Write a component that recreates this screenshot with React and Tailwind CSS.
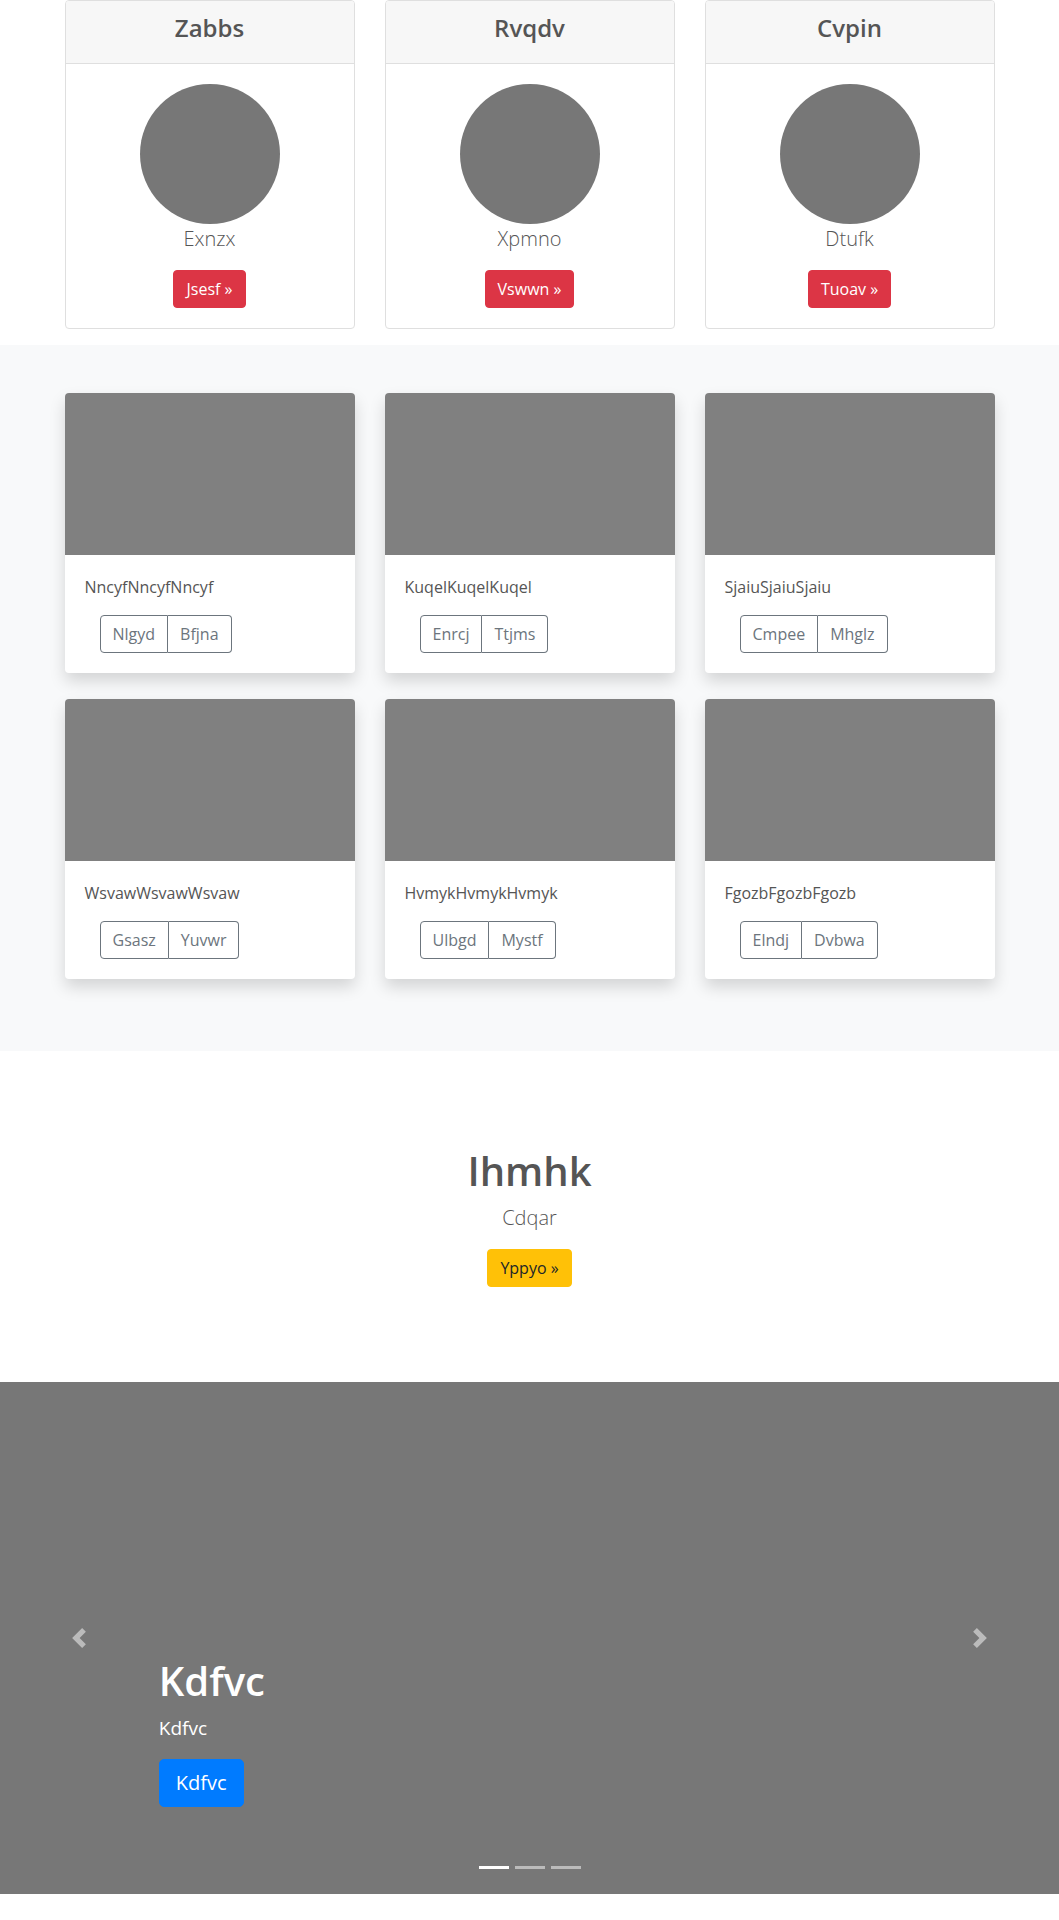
import React from 'react';

const plans = [
    { title: 'Zabbs', lead: 'Exnzx', cta: 'Jsesf' },
    { title: 'Rvqdv', lead: 'Xpmno', cta: 'Vswwn' },
    { title: 'Cvpin', lead: 'Dtufk', cta: 'Tuoav' },
];

const albums = [
    { text: 'NncyfNncyfNncyf', a: 'Nlgyd', b: 'Bfjna' },
    { text: 'KuqelKuqelKuqel', a: 'Enrcj', b: 'Ttjms' },
    { text: 'SjaiuSjaiuSjaiu', a: 'Cmpee', b: 'Mhglz' },
    { text: 'WsvawWsvawWsvaw', a: 'Gsasz', b: 'Yuvwr' },
    { text: 'HvmykHvmykHvmyk', a: 'Ulbgd', b: 'Mystf' },
    { text: 'FgozbFgozbFgozb', a: 'Elndj', b: 'Dvbwa' },
];

const PlanCard = ({ plan }) => (
    <div className="border border-[#dfdfdf] rounded-[4px] bg-white text-center">
        <div className="bg-[#f7f7f7] border-b border-[#dfdfdf] px-5 pt-[13px] pb-3 rounded-t-[3px]">
            <h4 className="text-[24px] font-semibold leading-[1.2] mb-2">{plan.title}</h4>
        </div>
        <div className="p-5">
            <div className="w-[140px] h-[140px] rounded-full bg-[#777] mx-auto" />
            <p className="text-[20px] font-light leading-[30px] mb-4">{plan.lead}</p>
            <button className="bg-[#dc3545] text-white border border-[#dc3545] rounded-[4px] px-3 py-1.5 text-base leading-6">
                {plan.cta} &raquo;
            </button>
        </div>
    </div>
);

const AlbumCard = ({ item }) => (
    <div className="bg-white rounded-[4px] shadow-[0_0.5rem_1rem_rgba(0,0,0,0.15)]">
        <div className="h-[162px] bg-[#808080] rounded-t-[4px]" />
        <div className="p-5">
            <p className="text-base leading-6 mb-4">{item.text}</p>
            <div className="inline-flex ml-[15px] text-[#6c757d]">
                <button className="border border-[#6c757d] rounded-l-[4px] px-3 py-1.5 text-base leading-6">
                    {item.a}
                </button>
                <button className="border border-[#6c757d] border-l-0 rounded-r-[4px] px-3 py-1.5 text-base leading-6">
                    {item.b}
                </button>
            </div>
        </div>
    </div>
);

const Chevron = ({ dir }) => (
    <svg width="20" height="20" viewBox="0 0 8 8" fill="#fff">
        {dir === 'prev'
            ? <path d="M5.25 0l-4 4 4 4 1.5-1.5L4.25 4l2.5-2.5L5.25 0z" />
            : <path d="M2.75 0l-1.5 1.5L3.75 4l-2.5 2.5L2.75 8l4-4-4-4z" />}
    </svg>
);

export default function App() {
    return (
        <div className="font-['Segoe_UI','Open_Sans','Noto_Sans',sans-serif] text-[#555] bg-white min-h-[1920px]">
            {/* pricing */}
            <section className="w-[960px] mx-auto px-[15px] pb-4">
                <div className="grid grid-cols-3 gap-[30px]">
                    {plans.map((p) => <PlanCard key={p.title} plan={p} />)}
                </div>
            </section>

            {/* album */}
            <section className="bg-[#f8f9fa] pt-12 pb-[72px]">
                <div className="w-[960px] mx-auto px-[15px]">
                    <div className="grid grid-cols-3 gap-x-[30px] gap-y-[26px]">
                        {albums.map((a) => <AlbumCard key={a.text} item={a} />)}
                    </div>
                </div>
            </section>

            {/* jumbotron */}
            <section className="pt-[96px] pb-[95px] text-center">
                <h1 className="text-[40px] font-semibold leading-[1.2] mb-2">Ihmhk</h1>
                <p className="text-[20px] font-light leading-[30px] mb-4">Cdqar</p>
                <button className="bg-[#ffc107] text-[#212529] border border-[#ffc107] rounded-[4px] px-3 py-1.5 text-base leading-6">
                    Yppyo &raquo;
                </button>
            </section>

            {/* carousel */}
            <div className="relative h-[512px] bg-[#777] overflow-hidden">
                <div className="absolute left-0 top-0 bottom-0 w-[15%] flex items-center justify-center opacity-50">
                    <Chevron dir="prev" />
                </div>
                <div className="absolute right-0 top-0 bottom-0 w-[15%] flex items-center justify-center opacity-50">
                    <Chevron dir="next" />
                </div>
                <div className="absolute left-[15%] right-[15%] bottom-[51px] pt-5 pb-5 text-white">
                    <h1 className="text-[40px] font-semibold leading-[1.2] mb-2">Kdfvc</h1>
                    <p className="text-[19px] font-medium leading-[30px] mb-4">Kdfvc</p>
                    <div className="flex mb-4">
                        <button className="bg-[#007bff] border border-[#007bff] text-white rounded-[5px] px-4 py-2 text-[20px] leading-[30px]">
                            Kdfvc
                        </button>
                    </div>
                </div>
                <div className="absolute left-0 right-0 bottom-[25px] flex justify-center gap-[6px]">
                    <span className="w-[30px] h-[3px] bg-white" />
                    <span className="w-[30px] h-[3px] bg-white opacity-50" />
                    <span className="w-[30px] h-[3px] bg-white opacity-50" />
                </div>
            </div>
        </div>
    );
}
